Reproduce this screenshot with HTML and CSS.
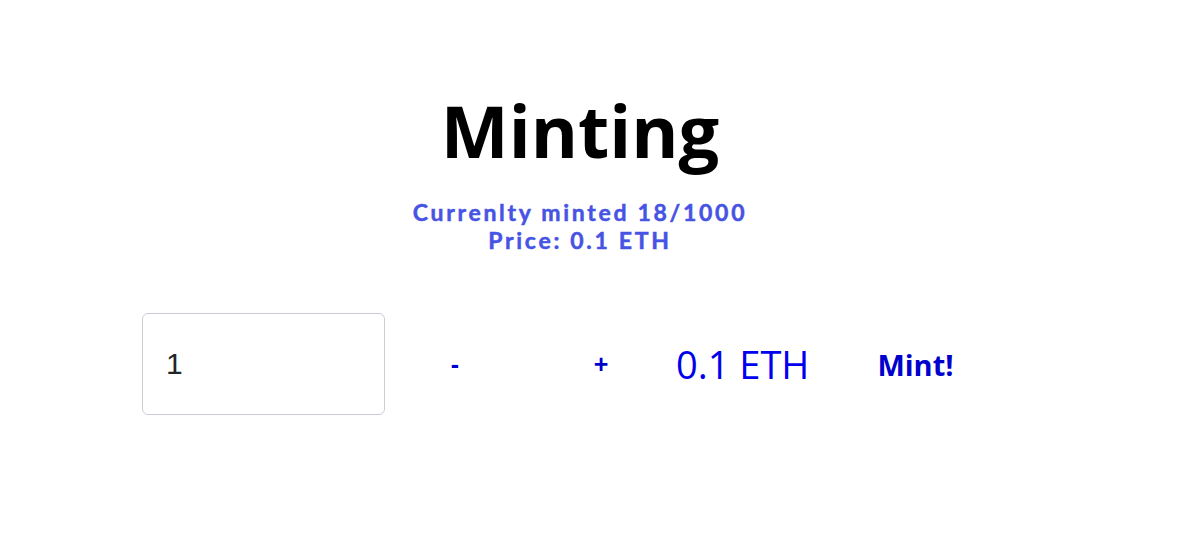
FILE: index.html
```html
<!DOCTYPE html>
<html lang="en">
<head>
    <meta charset="UTF-8">
    <meta name="viewport" content="width=device-width, initial-scale=1.0">
    <title>Minting</title>
    <link rel="stylesheet" href="styles.css">
</head>
<body>

    <!-- Title and supply info -->
    <div class="mint-header">
        <h1>Minting</h1>
        <div class="mint-stats">
            <div>Currenlty minted 18/1000</div>
            <div>Price: 0.1 ETH</div>
        </div>
    </div>

    <!-- Amount picker and mint button -->
    <div class="mint-row">
        <input type="number" id="amountInput" class="amount-input" value="1" />
        <button class="step-btn minus" id="minusButton">-</button>
        <button class="step-btn plus" id="plusButton">+</button>
        <span class="total-price" id="totalPrice">0.1 ETH</span>
        <button class="mint-btn" id="mintButton">Mint!</button>
    </div>

</body>
</html>
```

FILE: styles.css
```css
body {
    margin: 0;
    background-color: #ffffff;
    font-family: "Open Sans", sans-serif;
}

.mint-header {
    display: flex;
    flex-direction: column;
    align-items: center;
    padding-top: 81px;
    padding-right: 40px;
}

h1 {
    margin: 0;
    font-size: 72px;
    line-height: 98px;
    font-weight: 700;
    color: #000;
}

.mint-stats {
    margin-top: 19px;
    text-align: center;
    font-family: Lato, sans-serif;
    font-weight: 700;
    font-size: 23px;
    line-height: 28px;
    letter-spacing: 2.7px;
    color: #4753e3;
    -webkit-text-stroke: 0.5px #4753e3;
}

.mint-row {
    display: flex;
    align-items: center;
    margin-top: 59px;
    padding-left: 142px;
}

.amount-input {
    box-sizing: border-box;
    width: 243px;
    height: 102px;
    padding: 0 0 0 23px;
    border: 1.5px solid #c9ced5;
    border-radius: 6px;
    font-family: "Liberation Sans", Arial, sans-serif;
    font-size: 30px;
    color: #212529;
    outline: none;
    -moz-appearance: textfield;
}

.amount-input::-webkit-outer-spin-button,
.amount-input::-webkit-inner-spin-button {
    -webkit-appearance: none;
    margin: 0;
}

.step-btn {
    width: 50px;
    padding: 0;
    border: none;
    background: none;
    font-family: "Liberation Sans", Arial, sans-serif;
    font-weight: 700;
    font-size: 25px;
    color: #0000cc;
    cursor: pointer;
}

.minus {
    margin-left: 45px;
}

.plus {
    margin-left: 96px;
}

.total-price {
    margin-left: 50px;
    font-size: 38px;
    color: #0000ee;
}

.mint-btn {
    margin-left: 68px;
    padding: 0;
    border: none;
    background: none;
    font-family: "Open Sans", sans-serif;
    font-weight: 700;
    font-size: 29px;
    color: #0000cc;
    cursor: pointer;
}
```
